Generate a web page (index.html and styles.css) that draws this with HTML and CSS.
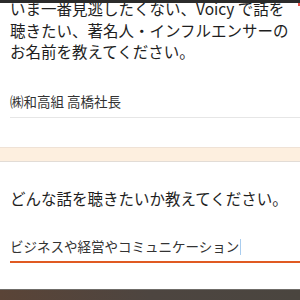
FILE: index.html
```html
<!DOCTYPE html>
<html lang="ja">
<head>
    <meta charset="UTF-8">
    <meta name="viewport" content="width=device-width, initial-scale=1.0">
    <title>Voicy アンケート</title>
    <link rel="stylesheet" href="styles.css">
</head>
<body>
    <div class="topbar"><span class="topbar-dot"></span></div>

    <div class="form">
        <div class="field field-first">
            <p class="question">いま一番見逃したくない、Voicy で話を<br>聴きたい、著名人・インフルエンサーの<br>お名前を教えてください。</p>
            <div class="answer answer-done">㈱和高組 高橋社長</div>
        </div>

        <div class="divider"></div>

        <div class="field">
            <p class="question">どんな話を聴きたいか教えてください。</p>
            <div class="answer answer-active">ビジネスや経営やコミュニケーション<span class="caret"></span></div>
        </div>
    </div>

    <div class="bottombar"></div>
</body>
</html>
```

FILE: styles.css
```css
body {
    margin: 0;
    padding: 0;
    background-color: #fff;
    font-family: "Noto Sans CJK JP", "Noto Sans", sans-serif;
    color: #222;
    overflow: hidden;
}

.topbar {
    position: fixed;
    top: 0;
    left: 0;
    right: 0;
    height: 3px;
    background-color: #2b2b2b;
    z-index: 2;
}

.topbar-dot {
    position: absolute;
    right: 0;
    top: 3px;
    width: 2px;
    height: 3px;
    background-color: #e8504a;
}

.field {
    padding-left: 10px;
}

.field-first {
    margin-top: -2px;
}

.question {
    margin: 0;
    font-size: 15.5px;
    line-height: 21.5px;
    color: #1e1e1e;
    white-space: nowrap;
}

.answer {
    margin-top: 28px;
    font-size: 13.5px;
    line-height: 20px;
    color: #333;
}

.answer-done {
    padding-bottom: 6px;
    border-bottom: 1px solid #e6e6e6;
}

.answer-active {
    margin-top: 27px;
    padding-bottom: 5px;
    border-bottom: 2px solid #e05a22;
}

.caret {
    display: inline-block;
    width: 1px;
    height: 16px;
    margin-left: 1px;
    vertical-align: -3px;
    background-color: #a9cdef;
}

.divider {
    margin: 29px 0 26px;
    height: 13px;
    background-color: #fdefdf;
    border-top: 1px solid #efe2d6;
    border-bottom: 1px solid #e2dcd6;
}

.bottombar {
    margin-top: 26px;
    height: 12px;
    background: linear-gradient(to right, #5a4437, #4d4540 50%, #4a453f);
    border-top: 1px solid #6f6c68;
}
```
